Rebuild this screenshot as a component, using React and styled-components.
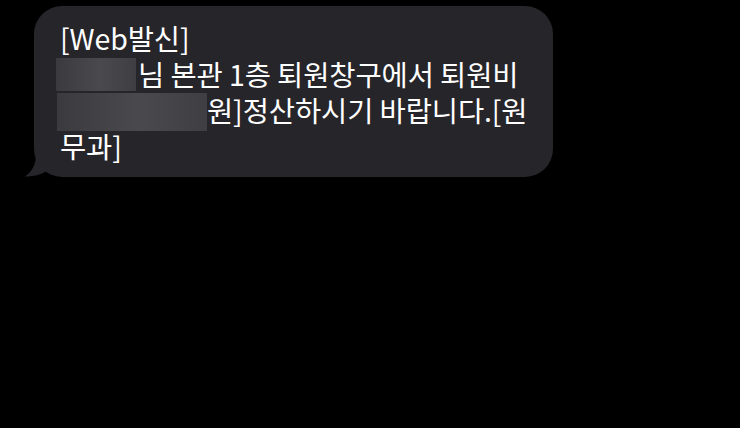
import React from 'react';
import styled, { createGlobalStyle } from 'styled-components';

const GlobalStyle = createGlobalStyle`
    html, body {
        margin: 0;
        padding: 0;
        background: #000;
    }
    body {
        font-family: "Noto Sans CJK KR", "Noto Sans", sans-serif;
    }
`;

// styles
const Screen = styled.div`
    width: 740px;
    height: 428px;
    background: #000;
    padding: 6px 0 0 34px;
    box-sizing: border-box;
`;

const BubbleWrap = styled.div`
    position: relative;
    width: 519px;
`;

const Bubble = styled.div`
    background: #26252a;
    border-radius: 28px;
    padding: 14px 20px 13px 26px;
    color: #fff;
    font-size: 28.5px;
    line-height: 36px;
    letter-spacing: -0.1px;
`;

const Line = styled.div`
    display: flex;
    align-items: center;
    height: 36px;
    white-space: nowrap;
`;

const Text = styled.div`
    display: block;
    height: 36px;
    line-height: 36px;
    margin-left: ${(p) => p.gap || 0}px;
`;

const Masked = styled.span`
    display: inline-block;
    flex: none;
    width: ${(p) => p.width}px;
    height: ${(p) => p.height}px;
    margin-left: ${(p) => p.offset}px;
    margin-top: ${(p) => p.top}px;
    background: linear-gradient(90deg, #3b3a3f 0%, #4a494e 55%, #3f3e43 100%);
    filter: blur(0.6px);
`;

const Tail = styled.svg`
    position: absolute;
    left: -9px;
    bottom: 0;
`;

const App = () => (
    <>
        <GlobalStyle />
        <Screen>
            <BubbleWrap>
                <Tail width="32" height="24" viewBox="0 0 32 24">
                    <path d="M11 0 C11 11 8 18 0 23.5 C9 23.5 17 21.5 23 17 L32 17 L32 0 Z" fill="#26252a" />
                </Tail>
                <Bubble>
                    <Line>
                        <Text>[Web발신]</Text>
                    </Line>
                    <Line>
                        <Masked width={80} height={33} offset={-4} top={0} />
                        <Text gap={2}>님 본관 1층 퇴원창구에서 퇴원비</Text>
                    </Line>
                    <Line>
                        <Masked width={150} height={38} offset={-3} top={4} />
                        <Text>원]정산하시기 바랍니다.[원</Text>
                    </Line>
                    <Line>
                        <Text>무과]</Text>
                    </Line>
                </Bubble>
            </BubbleWrap>
        </Screen>
    </>
);

export default App;
